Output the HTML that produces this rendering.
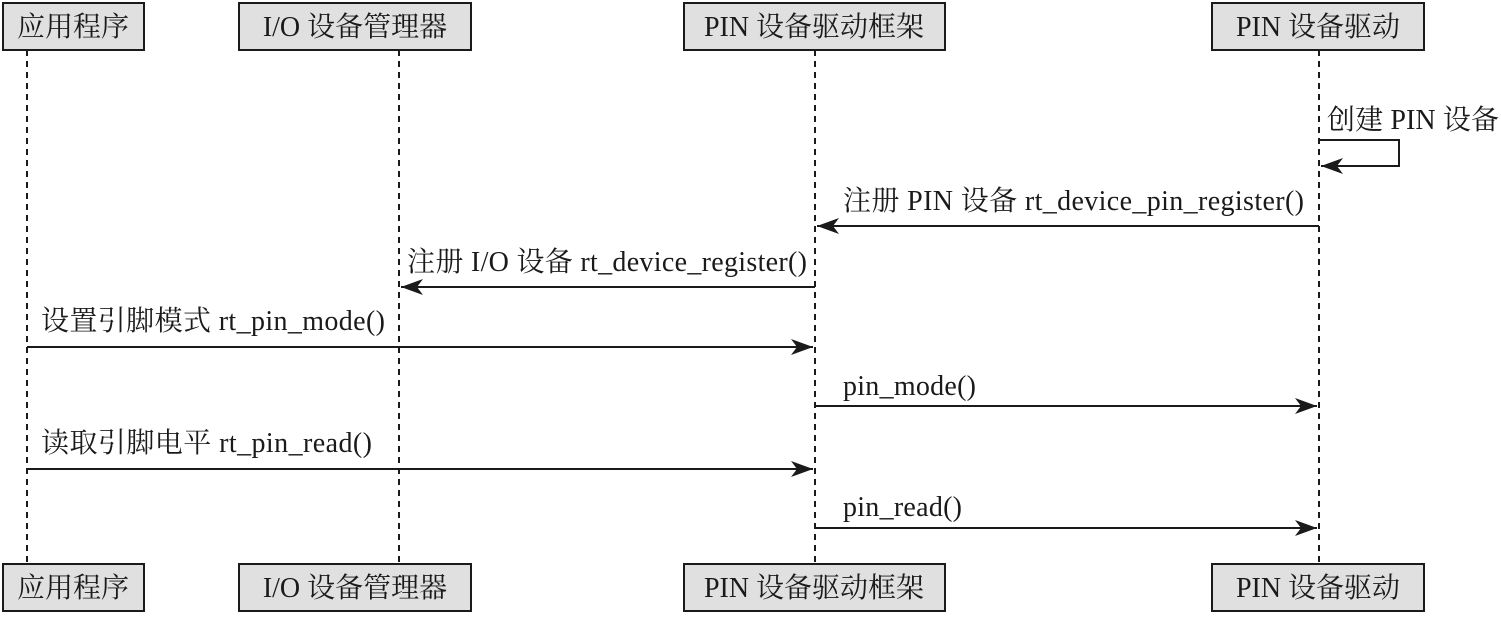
<!DOCTYPE html>
<html><head><meta charset="utf-8"><style>
html,body{margin:0;padding:0;background:#fff;}
svg text{font-family:"Liberation Serif","Noto Serif CJK SC",serif;font-size:28px;fill:#1a1a1a;}
</style></head><body>
<svg width="1501" height="614" xmlns="http://www.w3.org/2000/svg">
<defs><marker id="a" markerWidth="24" markerHeight="16" refX="22" refY="8" orient="auto" markerUnits="userSpaceOnUse"><path d="M0,0 L22,8 L0,16 L6,8 Z" fill="#1a1a1a"/></marker></defs>
<g stroke="#1a1a1a" stroke-width="2" stroke-dasharray="6,5">
<line x1="27" y1="50" x2="27" y2="563"/>
<line x1="399" y1="50" x2="399" y2="563"/>
<line x1="815" y1="50" x2="815" y2="563"/>
<line x1="1319" y1="50" x2="1319" y2="563"/>
</g>
<g fill="#e0e0e0" stroke="#1a1a1a" stroke-width="2">
<rect x="3" y="3" width="141" height="47"/>
<rect x="239" y="3" width="232" height="47"/>
<rect x="684" y="3" width="261" height="47"/>
<rect x="1212" y="3" width="212" height="47"/>
<rect x="3" y="564" width="141" height="47"/>
<rect x="239" y="564" width="232" height="47"/>
<rect x="684" y="564" width="261" height="47"/>
<rect x="1212" y="564" width="212" height="47"/>
</g>
<g text-anchor="middle">
<text x="73" y="36">应用程序</text><text x="355" y="36">I/O 设备管理器</text><text x="814" y="36">PIN 设备驱动框架</text><text x="1318" y="36">PIN 设备驱动</text>
<text x="73" y="597">应用程序</text><text x="355" y="597">I/O 设备管理器</text><text x="814" y="597">PIN 设备驱动框架</text><text x="1318" y="597">PIN 设备驱动</text>
</g>
<g stroke="#1a1a1a" stroke-width="2" fill="none">
<polyline points="1319,140 1399,140 1399,166 1321,166" marker-end="url(#a)"/>
<line x1="1319" y1="226" x2="817" y2="226" marker-end="url(#a)"/>
<line x1="815" y1="287" x2="401" y2="287" marker-end="url(#a)"/>
<line x1="27" y1="347" x2="813" y2="347" marker-end="url(#a)"/>
<line x1="815" y1="406" x2="1317" y2="406" marker-end="url(#a)"/>
<line x1="27" y1="469" x2="813" y2="469" marker-end="url(#a)"/>
<line x1="815" y1="528" x2="1317" y2="528" marker-end="url(#a)"/>
</g>
<text x="1327" y="129" textLength="172" lengthAdjust="spacing">创建 PIN 设备</text>
<text x="843" y="210" textLength="461" lengthAdjust="spacing">注册 PIN 设备 rt_device_pin_register()</text>
<text x="407" y="271" textLength="400" lengthAdjust="spacing">注册 I/O 设备 rt_device_register()</text>
<text x="41" y="330" textLength="344" lengthAdjust="spacing">设置引脚模式 rt_pin_mode()</text>
<text x="843" y="395" textLength="133" lengthAdjust="spacing">pin_mode()</text>
<text x="41" y="452" textLength="331" lengthAdjust="spacing">读取引脚电平 rt_pin_read()</text>
<text x="843" y="516" textLength="119" lengthAdjust="spacing">pin_read()</text>
</svg>
</body></html>
